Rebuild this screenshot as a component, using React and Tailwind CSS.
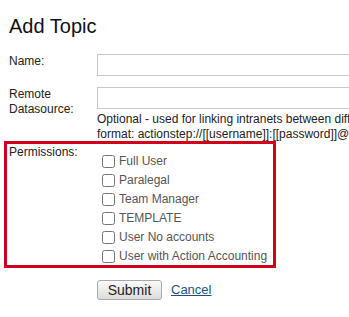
import React from 'react';

const permissions = [
  'Full User',
  'Paralegal',
  'Team Manager',
  'TEMPLATE',
  'User No accounts',
  'User with Action Accounting',
];

export default function App() {
  return (
    <div className="w-[349px] h-[317px] overflow-hidden bg-white font-['Liberation_Sans',Arial,sans-serif] text-[12px] text-[#222]">
      <div className="pl-[9px] pt-[15px]">
        <h1 className="text-[20px] leading-[23px] text-[#111]">Add Topic</h1>

        <div className="mt-[16px] flex items-start">
          <label className="w-[88px] shrink-0 leading-[15px]">Name:</label>
          <input type="text" className="w-[300px] shrink-0 h-[22px] border border-[#c8c8c8] bg-white" />
        </div>

        <div className="mt-[11px] flex">
          <label className="w-[88px] shrink-0 leading-[15px]">Remote Datasource:</label>
          <div className="shrink-0">
            <input type="text" className="w-[300px] h-[22px] border border-[#c8c8c8] bg-white" />
            <p className="mt-[3px] leading-[15px] whitespace-nowrap">
              Optional - used for linking intranets between different systems.
            </p>
            <p className="leading-[15px] whitespace-nowrap">
              format: actionstep://[[username]]:[[password]]@[[server]]
            </p>
          </div>
        </div>

        <div className="mt-[-1px] ml-[-5px] w-[272px] border-[3px] border-[#d0021b] pl-[2px] pb-[2px] flex">
          <label className="w-[88px] shrink-0 leading-[15px] pt-[1px]">Permissions:</label>
          <div className="pt-[11px] flex flex-col gap-[6px]">
            {permissions.map((p) => (
              <label key={p} className="h-[13px] flex items-center text-[#555] leading-[15px]">
                <input type="checkbox" className="m-0 ml-[5px] mr-[4px] h-[13px] w-[13px] shrink-0" />
                <span>{p}</span>
              </label>
            ))}
          </div>
        </div>

        <div className="mt-[12px] ml-[88px] flex items-center gap-[9px]">
          <button className="w-[65px] h-[20px] rounded-[3px] border border-[#a9a9a9] bg-gradient-to-b from-[#fafafa] to-[#dcdcdc] text-[14px] leading-[16px] text-[#222]">
            Submit
          </button>
          <a href="#" className="text-[13px] text-[#1f4f82] underline">Cancel</a>
        </div>
      </div>
    </div>
  );
}
